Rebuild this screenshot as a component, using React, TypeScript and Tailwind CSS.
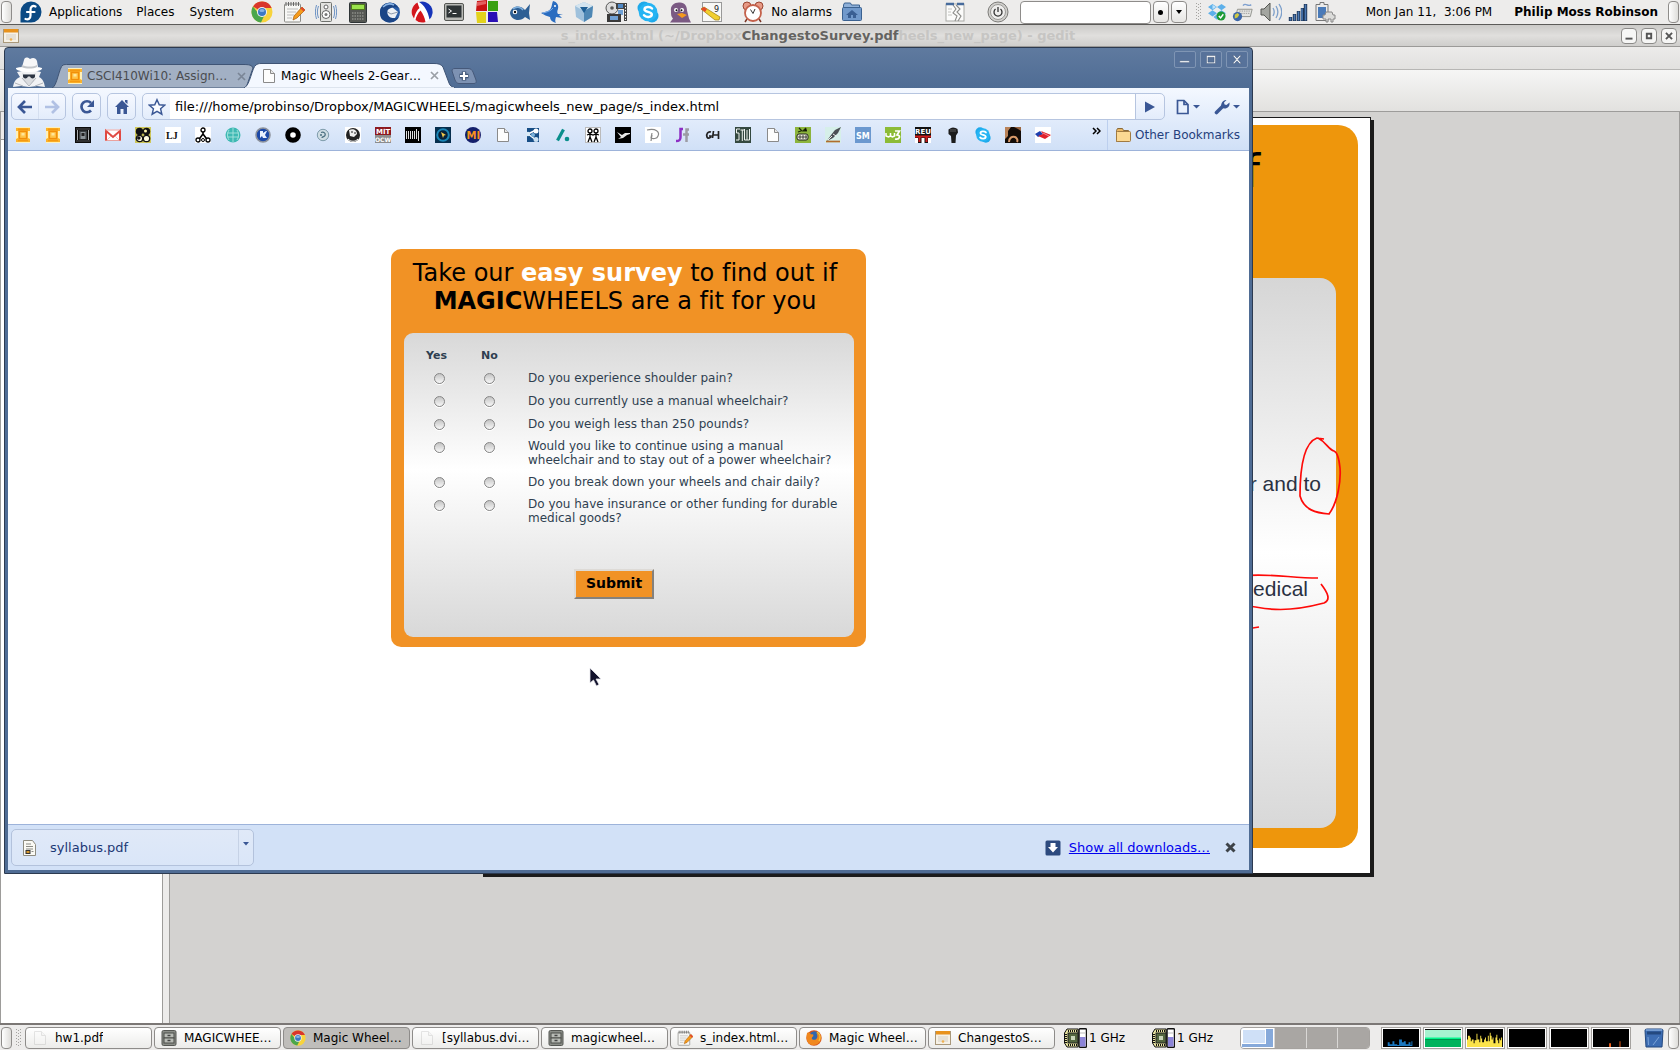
import React from "react";

type IconProps = { size?: number; children: React.ReactNode; box?: string; className?: string };

function Svg({ size = 16, box = "0 0 16 16", className = "", children }: IconProps) {
  return (
    <svg width={size} height={size} viewBox={box} className={"block shrink-0 " + className} aria-hidden="true">
      {children}
    </svg>
  );
}

const big = "0 0 22 22";

function ChromeLogo({ size = 22 }: { size?: number }) {
  return (
    <Svg size={size} box={big}>
      <circle cx="11" cy="11" r="10.5" fill="#f7d33c" />
      <path d="M11 11 L2 5.5 A10.5 10.5 0 0 1 20.6 7 L11 7z" fill="#d9362c" />
      <path d="M1.9 5.6 A10.5 10.5 0 0 0 10 21.4 L14 13 L8 13z" fill="#4aa64b" />
      <circle cx="11" cy="11" r="5" fill="#f4f4f4" />
      <circle cx="11" cy="11" r="4" fill="#3c78c3" />
      <ellipse cx="11" cy="9.5" rx="2.6" ry="1.6" fill="#86b4e6" />
    </Svg>
  );
}

function NotepadIcon({ size = 22 }: { size?: number }) {
  return (
    <Svg size={size} box={big}>
      <rect x="1.5" y="3" width="16" height="18" rx="1" fill="#f7f7f5" stroke="#8c8c88" />
      <path d="M3 1v4M5.5 1v4M8 1v4M10.5 1v4M13 1v4M15.5 1v4" stroke="#666" strokeWidth="1" />
      <path d="M4 8h11M4 11h9M4 14h7M4 17h5" stroke="#bbb" />
      <path d="M19 6l3 3-8 8-4 2 1-4z" fill="#f59b1c" stroke="#a65b08" strokeWidth=".7" />
      <path d="M19 6l3 3-1.5 1.5-3-3z" fill="#e2482d" />
    </Svg>
  );
}

function SkypeIcon({ size = 22 }: { size?: number }) {
  return (
    <Svg size={size} box={big}>
      <circle cx="7" cy="7" r="6.5" fill="#1ea9ea" />
      <circle cx="15" cy="15" r="6.5" fill="#1ea9ea" />
      <circle cx="11" cy="11" r="9.3" fill="#25b4f3" />
      <path d="M15 7.5C13 5.3 7.5 5.600 7.500 8.500C7.500 11.500 14.800 10.300 14.800 13.500C14.800 16.500 9 16.800 7 14.300" fill="none" stroke="#fff" strokeWidth="2.500" strokeLinecap="round" />
    </Svg>
  );
}

function DocIcon({ size = 16 }: { size?: number }) {
  return (
    <Svg size={size}>
      <path d="M2.500 1.500h7l4 4v9h-11z" fill="#fdfdfd" stroke="#8a8a8a" />
      <path d="M9.500 1.500v4h4" fill="#e8e8e8" stroke="#8a8a8a" />
    </Svg>
  );
}

function GateIcon({ dark = false }: { dark?: boolean }) {
  if (dark) {
    return (
      <Svg>
        <rect width="16" height="16" fill="#0c0c0c" />
        <path d="M1 2h14M1 14h14" stroke="#555" />
        <path d="M2.500 3v10M13.500 3v10" stroke="#a9adb0" />
        <path d="M4 3.500h8v9H4z" fill="#3a3f42" />
        <path d="M5.500 5h5v7h-5z" fill="#8b9398" />
        <rect x="6.500" y="6" width="3" height="3" fill="#222" />
      </Svg>
    );
  }
  return (
    <Svg>
      <rect x="1" width="14" height="16" fill="#fff0b8" />
      <path d="M1 1h14v3h-2v7l2 1v3H1v-3l2-1V4H1z" fill="#fbb22c" />
      <path d="M3 1.500h10v2H3z" fill="#f59a10" />
      <rect x="4.500" y="4.500" width="7" height="7" fill="#ffc64a" stroke="#f18f0a" strokeWidth="1.300" />
      <rect x="6.500" y="6" width="3" height="2.500" fill="#ffe69a" />
      <path d="M3 13.500h10" stroke="#f59a10" strokeWidth="1.500" />
    </Svg>
  );
}

function CabinetIcon() {
  return (
    <Svg>
      <rect x="1" y=".5" width="14" height="15" rx="1.500" fill="#8b8e88" stroke="#555753" />
      <rect x="3" y="3" width="10" height="5" fill="#b9bcb6" stroke="#4b4d49" />
      <rect x="3" y="8" width="10" height="5" fill="#b9bcb6" stroke="#4b4d49" />
      <path d="M6.500 5.500h3M6.500 10.500h3" stroke="#444" strokeWidth="1.500" />
    </Svg>
  );
}

function PresentationIcon() {
  return (
    <Svg>
      <rect x=".5" y="1.500" width="15" height="13" fill="#f6f1e6" stroke="#a9987a" />
      <rect x="1" y="1" width="14" height="3.500" fill="#e8921c" />
      <path d="M3 7h10M3 9h10M3 11h10" stroke="#d5cfc4" />
      <circle cx="8" cy="11.500" r="1.300" fill="#f0b050" />
    </Svg>
  );
}

function FirefoxIcon() {
  return (
    <Svg>
      <circle cx="8" cy="8" r="7.700" fill="#d8541a" />
      <circle cx="8.500" cy="6.500" r="5.200" fill="#2f67ae" />
      <path d="M1 3c2-1 3 0 4 1.500C7 4 8 5 7 6.500C6 7 5.500 8 6 9c1.500 1.500 4 1 5-1c1-2 0-4-1-5.500c3 1 5.500 4 4.500 8C12 16 5 16.500 2 12.500C0 9 .5 6 1 3z" fill="#f0881e" />
      <path d="M11 2c3 2 4 5 2 9" fill="none" stroke="#f8c535" strokeWidth="1.300" />
    </Svg>
  );
}

function Fav({ bg, children }: { bg?: string; children: React.ReactNode }) {
  return (
    <Svg>
      {bg && <rect width="16" height="16" fill={bg} />}
      {children}
    </Svg>
  );
}

const letter = { fontFamily: "DejaVu Sans", fontWeight: 700 } as const;

const favicons: { name: string; icon: React.ReactNode }[] = [
  { name: "Gate 1", icon: <GateIcon /> },
  { name: "Gate 2", icon: <GateIcon /> },
  { name: "Gate 3", icon: <GateIcon dark /> },
  {
    name: "Mail",
    icon: (
      <Fav>
        <rect y="2.500" width="16" height="11.500" fill="#fff" />
        <path d="M1 14V4L8 10l7-6v10" fill="none" stroke="#e04a43" strokeWidth="2" />
        <path d="M0 3h16M0 13.500h16" stroke="#e58a85" strokeWidth=".8" />
        <path d="M2 13l4-4M14 13l-4-4" stroke="#f0b0ac" strokeWidth=".8" />
      </Fav>
    ),
  },
  {
    name: "Dots",
    icon: (
      <Fav bg="#cfc85a">
        <circle cx="4.500" cy="4.500" r="3.700" fill="#111" />
        <circle cx="11.500" cy="4.500" r="3.700" fill="#111" />
        <circle cx="10.500" cy="4" r="1.500" fill="#fff5a8" />
        <circle cx="4.500" cy="11.500" r="3.200" fill="#fffce0" stroke="#111" strokeWidth="1.300" />
        <circle cx="11.500" cy="11.500" r="3.200" fill="#fffce0" stroke="#111" strokeWidth="1.300" />
        <circle cx="3.800" cy="11" r="1.800" fill="#111" />
      </Fav>
    ),
  },
  { name: "LJ", icon: <Fav bg="#fff"><text x="1" y="11.500" fontSize="10" fontWeight="700" fontFamily="Liberation Serif" fill="#111">LJ</text></Fav> },
  {
    name: "Tree",
    icon: (
      <Fav bg="#fff">
        <path d="M8 4v3L3.500 13M8 7l4.500 6" stroke="#000" strokeWidth="1.600" fill="none" />
        <circle cx="8" cy="3" r="2" fill="#fff" stroke="#000" strokeWidth="1.300" />
        <circle cx="3" cy="13" r="2" fill="#fff" stroke="#000" strokeWidth="1.300" />
        <circle cx="13" cy="13" r="2" fill="#fff" stroke="#000" strokeWidth="1.300" />
        <circle cx="8" cy="13" r="1.500" fill="#fff" stroke="#000" />
      </Fav>
    ),
  },
  {
    name: "Globe",
    icon: (
      <Fav>
        <circle cx="8" cy="8" r="7.500" fill="#3fb9b3" />
        <path d="M2 6h12M2 10h12M8 1v14M4 3c-2 4-2 6 0 10M12 3c2 4 2 6 0 10" stroke="#a8e4df" fill="none" strokeWidth=".9" />
      </Fav>
    ),
  },
  {
    name: "K",
    icon: (
      <Fav>
        <circle cx="8" cy="8" r="7" fill="#1c49a8" stroke="#8d929c" strokeWidth="1.600" />
        <path d="M5 4h3v2l3-2h1l-2 4 2 3H8l-1-2-2 2z" fill="#e8f0ff" />
      </Fav>
    ),
  },
  { name: "Record", icon: <Fav><circle cx="8" cy="8" r="5.300" fill="#fff" stroke="#000" strokeWidth="5" /><circle cx="8" cy="8" r="1.200" fill="#fff" /></Fav> },
  {
    name: "Swirl",
    icon: (
      <Fav>
        <circle cx="8" cy="8" r="5.700" fill="#cfdde3" stroke="#7e9cab" />
        <path d="M6 5.500c3-1 5 1 4 3S7 9 7 11M5 8h2" stroke="#4c7081" fill="none" strokeWidth="1.300" />
      </Fav>
    ),
  },
  {
    name: "Face",
    icon: (
      <Fav bg="#fff">
        <circle cx="8" cy="8" r="7" fill="#222" />
        <path d="M4 3c4-2 8 0 8 4l-3 3-4-1z" fill="#eee" />
        <path d="M6 5h2M9 6h2" stroke="#222" strokeWidth="1" />
        <path d="M3 12c3 3 7 3 10 0" stroke="#fff" strokeWidth="1" fill="none" />
      </Fav>
    ),
  },
  {
    name: "MIT OCW",
    icon: (
      <Fav bg="#8d8d8d">
        <rect width="16" height="8" fill="#8d1a20" />
        <text x="1" y="7" fontSize="7" fill="#fff" style={letter}>MIT</text>
        <text x="0" y="15" fontSize="6" fill="#fff" style={letter}>OCW</text>
      </Fav>
    ),
  },
  { name: "Press", icon: <Fav bg="#000"><path d="M1.500 4v8M3.500 4v8M5.500 4v8M7.500 4v8M9.500 4v8M11.500 2v10M13.500 4v10" stroke="#ddd" strokeWidth="1" /></Fav> },
  {
    name: "Target",
    icon: (
      <Fav bg="#062f4e">
        <circle cx="8" cy="8" r="5.800" fill="#06223b" stroke="#1b87b8" strokeWidth="2" />
        <path d="M6 5l5 3-2 .5L8 11z" fill="#f2c94a" />
      </Fav>
    ),
  },
  { name: "MI", icon: <Fav><circle cx="8" cy="8" r="8" fill="#15206b" /><text x="1.500" y="12" fontSize="10" fill="#f7931e" style={letter}>MI</text></Fav> },
  { name: "Page", icon: <DocIcon /> },
  {
    name: "Share",
    icon: (
      <Fav>
        <path d="M2 1h12v14H2z" fill="#174e86" />
        <path d="M3 7l8-4M3 7l8 6" stroke="#fff" strokeWidth="1.500" />
        <circle cx="3" cy="7" r="2.200" fill="#dcebf6" />
        <circle cx="11" cy="4" r="2.500" fill="#fff" />
        <circle cx="11" cy="12.500" r="2.500" fill="#cde2f2" />
        <circle cx="8" cy="8" r="2" fill="#7db3dc" />
      </Fav>
    ),
  },
  { name: "Slash", icon: <Fav><path d="M2.500 13.500L8.500 2.500" stroke="#0a8f8c" strokeWidth="3.200" /><circle cx="12" cy="12" r="2.300" fill="#0a8f8c" /></Fav> },
  {
    name: "Figures",
    icon: (
      <Fav bg="#fff">
        <rect x=".5" y=".5" width="15" height="15" fill="none" stroke="#777" strokeDasharray="1 1" />
        <circle cx="5" cy="4" r="2" fill="none" stroke="#000" strokeWidth="1.300" />
        <circle cx="11" cy="4" r="2" fill="none" stroke="#000" strokeWidth="1.300" />
        <path d="M5 6v4M2 8l3-1 3 1 3-1 3 1M5 10l-2 5M5 10l2 5M11 6v4l-2 5M11 10l2 5" stroke="#000" fill="none" strokeWidth="1.300" />
      </Fav>
    ),
  },
  { name: "Bird", icon: <Fav bg="#000"><path d="M2 5l5 3 3-2h5v1l-3 1-4 3-5 1 3-2z" fill="#e8e8e8" /></Fav> },
  { name: "D", icon: <Fav bg="#fff"><path d="M2 3c9-2 13 2 11 6c-1 3-5 3-7 2L7 6M6 14l1-6" fill="none" stroke="#888" strokeWidth="1.200" /></Fav> },
  {
    name: "SourceForge",
    icon: (
      <Fav>
        <path d="M8 2H5.500v8c0 3-1 4-4.500 4" fill="none" stroke="#8d2ec4" strokeWidth="2.500" />
        <path d="M14 2.500h-2.500V15M8 7.500h6" fill="none" stroke="#9c9ca4" strokeWidth="2.500" />
      </Fav>
    ),
  },
  { name: "GH", icon: <Fav><path d="M6 5c-3-1-5 2-4 5c1 2 4 1 4-1H4M8.500 4l-1 7M8 8h5M13.500 4v8" fill="none" stroke="#222" strokeWidth="1.700" /></Fav> },
  { name: "STW", icon: <Fav bg="#34483f"><path d="M5 2H1.500v4H4v7H1M5.500 3H9M7.300 3v11M9.500 2v11h2.500V3M12 13h2.500V2" fill="none" stroke="#eef2ee" strokeWidth="1" /></Fav> },
  { name: "Page", icon: <DocIcon /> },
  {
    name: "Skull",
    icon: (
      <Fav bg="#8cb43c">
        <path d="M4 1l3 3M11 1L8 4h4M3 5l3-1" stroke="#1d2a08" strokeWidth="1.200" />
        <rect x="2" y="7" width="11" height="6" rx="2" fill="#eef0dc" stroke="#222" />
        <path d="M5 8v4M8 8v4M11 8v4M3 10h9" stroke="#222" strokeWidth=".8" />
      </Fav>
    ),
  },
  {
    name: "Pen",
    icon: (
      <Fav bg="#d6efe9">
        <path d="M16 0l-6 3-4 5-4 6 6-3 5-5z" fill="#4b5054" />
        <path d="M8 7l3 2M3 13l4-4" stroke="#fff" strokeWidth=".9" />
        <path d="M1 14.500h14" stroke="#b06d2e" strokeWidth="1.700" />
      </Fav>
    ),
  },
  { name: "SM", icon: <Fav bg="#6b98cf"><text x="1" y="11.500" fontSize="8" fill="#fff" style={letter}>SM</text></Fav> },
  {
    name: "W3",
    icon: (
      <Fav bg="#8cbb36">
        <path d="M1 6v3l2.500 1 2-1V6M5.500 9l2 1 2-1V6" fill="none" stroke="#fff" strokeWidth="1.500" />
        <path d="M10 4h4.500L12 8c4 0 3 5-2 4" fill="none" stroke="#fff" strokeWidth="1.700" />
      </Fav>
    ),
  },
  {
    name: "REU",
    icon: (
      <Fav bg="#111">
        <text x="0" y="7" fontSize="7" fill="#fff" style={letter}>REU</text>
        <path d="M0 11h3v5H0zM13 11h3v5h-3zM6.500 11h3v5h-3z" fill="#fff" />
        <path d="M0 9.500h16M4.500 9v6M11.500 9v6" stroke="#d01a1a" strokeWidth="2" />
      </Fav>
    ),
  },
  { name: "Fist", icon: <Fav><path d="M3.500 2.500L6 1l2-.5 2.500.5 2 1 .5 3.500-2 3L10.500 16H6.500L6 9 3.500 7z" fill="#1c1c1c" /><path d="M6 2v3M8 2v3M10 2v3" stroke="#777" strokeWidth=".7" /></Fav> },
  { name: "Skype", icon: <SkypeIcon size={16} /> },
  {
    name: "Portrait",
    icon: (
      <Fav bg="#120c08">
        <path d="M0 0h6L3 4v5l-3 3z" fill="#b98258" />
        <path d="M9 0h7v4l-3-2z" fill="#9a6640" />
        <path d="M4 15c0-4 3-6 6-5 2 1 3 3 2 5" fill="none" stroke="#d89a6a" strokeWidth="2" />
      </Fav>
    ),
  },
  {
    name: "Bank",
    icon: (
      <Fav bg="#fff">
        <path d="M0 7l5-3 3 3-5 3z" fill="#1d3fae" />
        <path d="M6 4l10 4-6 4-7-3 5-2z" fill="#e0202c" />
        <path d="M8 6l6 3" stroke="#fff" strokeWidth=".5" />
      </Fav>
    ),
  },
];

const launchers: { name: string; icon: React.ReactNode }[] = [
  { name: "Chrome", icon: <ChromeLogo /> },
  { name: "Text Editor", icon: <NotepadIcon /> },
  {
    name: "Sound",
    icon: (
      <Svg size={22} box={big}>
        <rect x="5.500" y="1.500" width="11" height="19" rx="1" fill="#e2e2df" stroke="#6f716d" />
        <circle cx="11" cy="6" r="2" fill="#fff" stroke="#666" />
        <circle cx="11" cy="13.500" r="4" fill="#fff" stroke="#666" />
        <circle cx="11" cy="13.500" r="1.500" fill="#777" />
        <path d="M3.500 5c-1.500 4-1.500 8 0 12M18.500 5c1.500 4 1.500 8 0 12M1.500 4c-1.500 5-1.500 9 0 14M20.500 4c1.500 5 1.500 9 0 14" fill="none" stroke="#6d93c4" />
      </Svg>
    ),
  },
  {
    name: "Calculator",
    icon: (
      <Svg size={22} box={big}>
        <rect x="2.500" y="1.500" width="17" height="20" rx="1" fill="#555753" stroke="#2e3436" />
        <rect x="4.500" y="3.500" width="13" height="5" fill="#9be34c" stroke="#4e7a1c" />
        <path d="M5 12h12M5 15h12M5 18h12" stroke="#8c8f89" strokeWidth="1.500" strokeDasharray="1.500 1" />
      </Svg>
    ),
  },
  {
    name: "Thunderbird",
    icon: (
      <Svg size={22} box={big}>
        <circle cx="11" cy="11.500" r="10" fill="#2a5ea8" />
        <path d="M5 9l8-3 6 5-3 6-8 0-3-4z" fill="#eef1f5" />
        <path d="M5 9l7 4 7-2" stroke="#8c99ac" fill="none" />
        <path d="M1 10C2 3 9 0 16 3l5 5c-3-2-6-2-9-1s-5 3-3 7c2 4 8 4 11 2-3 6-12 7-16 3C1 17 1 13 1 10z" fill="#1b4586" />
        <path d="M4 6c3-3 7-4 11-2" stroke="#89b3e4" fill="none" strokeWidth="1.500" />
      </Svg>
    ),
  },
  {
    name: "Racket",
    icon: (
      <Svg size={22} box={big}>
        <circle cx="11" cy="11" r="10.500" fill="#fff" />
        <path d="M8 1A10.500 10.500 0 0 1 18.500 18.500C17 10 13 4 8 1z" fill="#1634b8" />
        <path d="M6.500 1.500A10.500 10.500 0 0 0 3 17.500C4 13 6 9 8.500 7 7.500 5 7 3 6.500 1.500z" fill="#d3161c" />
        <path d="M9.500 9.500C7 12 5 16 4.500 19A10.500 10.500 0 0 0 14.500 21C13.500 16 12 13 9.500 9.500z" fill="#d3161c" />
      </Svg>
    ),
  },
  {
    name: "Terminal",
    icon: (
      <Svg size={22} box={big}>
        <rect x="1.500" y="2.500" width="19" height="17" rx="1.500" fill="#b9bab6" stroke="#555753" />
        <rect x="3.500" y="4.500" width="15" height="12" fill="#2e3436" />
        <path d="M5.500 8l3 2-3 2M9.500 12.500h4" stroke="#fff" fill="none" />
      </Svg>
    ),
  },
  {
    name: "Blocks",
    icon: (
      <Svg size={24} box="0 0 24 24">
        <path d="M2 1l10-1v11H1z" fill="#c81414" />
        <path d="M13 1h10v10H13z" fill="#39a012" />
        <path d="M1 12h10v11H2z" fill="#e3d21c" />
        <path d="M13 12h9l1 10H13z" fill="#2a0fb5" />
        <path d="M2 2l9-1v3l-9 2z" fill="#f08080" opacity=".7" />
      </Svg>
    ),
  },
  {
    name: "Bluefish",
    icon: (
      <Svg size={22} box={big}>
        <path d="M1 12C2 5 11 3 16 9l5-6-1 9 1 7-5-3C12 21 2 20 1 12z" fill="#2d5f94" />
        <path d="M4 8c3-3 8-2 10 1" stroke="#7fb0dd" fill="none" strokeWidth="1.500" />
        <circle cx="6" cy="11" r="2.300" fill="#fff" />
        <circle cx="6" cy="11" r="1.200" fill="#111" />
      </Svg>
    ),
  },
  {
    name: "Swordfish",
    icon: (
      <Svg size={22} box={big}>
        <path d="M12 0c4 1 6 4 5 8-1 2-1 4 0 5l5 0-4 1 3 3-6-1c-1 3-1 5 0 6-4-1-6-3-6-6-3-1-6-2-9-4 4-1 9-2 10-5 1-2 1-5 2-7z" fill="#2b6dc0" />
        <path d="M2 12c4-1 8-2 10-5" stroke="#7fb0ea" fill="none" />
        <circle cx="14" cy="5" r="1" fill="#fff" />
      </Svg>
    ),
  },
  {
    name: "VirtualBox",
    icon: (
      <Svg size={22} box={big}>
        <path d="M11 1l9 4-1 11-8 5-8-5L2 5z" fill="#9fc1dc" />
        <path d="M11 1l9 4-9 5-9-5z" fill="#d3e4f0" />
        <path d="M11 10l9-5-1 11-8 5z" fill="#4e87b4" />
        <path d="M7 6l4 6 4-6z" fill="#1f5f95" />
      </Svg>
    ),
  },
  {
    name: "Movie",
    icon: (
      <Svg size={22} box={big}>
        <circle cx="7" cy="7" r="6" fill="#ddd" stroke="#555" />
        <circle cx="7" cy="7" r="1.800" fill="#555" />
        <path d="M11 2h11v18h-3V8h-8z" fill="#444" />
        <rect x="13" y="3" width="5" height="4" fill="#4f87c4" />
        <rect x="13" y="9" width="5" height="5" fill="#6fa0d4" />
        <rect x="2" y="13" width="14" height="8" fill="#3a3a3a" />
        <rect x="5" y="15" width="8" height="4" fill="#6fa0d4" />
        <path d="M20.500 3v16" stroke="#fff" strokeDasharray="1.500 1.500" />
      </Svg>
    ),
  },
  { name: "Skype", icon: <SkypeIcon /> },
  {
    name: "Pidgin",
    icon: (
      <Svg size={22} box={big}>
        <path d="M2 10C1 4 6 1 11 1.500c5 0 7 4 7 8l2 8 2 4H1l3-4c-2-2-2-4-2-7z" fill="#7b5a83" />
        <circle cx="7" cy="9" r="2" fill="#fff" />
        <circle cx="13" cy="9" r="2" fill="#fff" />
        <circle cx="7.500" cy="9.300" r="1" fill="#111" />
        <circle cx="12.500" cy="9.300" r="1" fill="#111" />
        <path d="M8 13l5-1 5 2-5 3z" fill="#f59a1d" />
      </Svg>
    ),
  },
  {
    name: "Planner",
    icon: (
      <Svg size={22} box={big}>
        <rect x="1.500" y="1.500" width="19" height="19" fill="#f8f8f6" stroke="#999" />
        <text x="13" y="11" fontSize="8" fontFamily="DejaVu Sans" fill="#222">9</text>
        <path d="M0 8l3-2 16 10-1 3-4 0z" fill="#f1cf2e" stroke="#9b7b0e" strokeWidth=".7" />
        <path d="M0 8l3-2 3 2-2 3z" fill="#e34b2a" />
      </Svg>
    ),
  },
];

function Grip() {
  return (
    <svg width="6" height="18" viewBox="0 0 6 18" className="block shrink-0" aria-hidden="true">
      <path d="M.5 0v18M2.500 1v17M4.500 0v18" stroke="#a5a4a1" strokeDasharray="1 2" />
    </svg>
  );
}

function Handle() {
  return <button aria-label="Hide panel" className="h-[22px] w-[11px] shrink-0 rounded border border-[#8e8c8a] bg-linear-to-r from-white to-[#deddda]" />;
}

function TopPanel() {
  return (
    <header className="flex h-[25px] shrink-0 items-center border-b border-[#5c5b59] bg-[#edeceb] px-px text-xs text-black">
      <Handle />
      <nav className="flex items-center pl-2">
        <Svg size={22} box={big}>
          <path d="M11 .5a10.500 10.500 0 1 1 0 21H.5V11A10.500 10.500 0 0 1 11 .5z" fill="#0b4a84" />
          <path d="M15.500 5.500c-3-1.500-5 .5-5 3v6c0 3-2 4.500-5 3.500M7 11h7.500" fill="none" stroke="#fff" strokeWidth="2.200" strokeLinecap="round" />
        </Svg>
        <button className="ml-[7px]">Applications</button>
        <button className="ml-[14px]">Places</button>
        <button className="ml-[15px]">System</button>
      </nav>
      <div className="ml-[17px] flex items-center gap-[10px]">
        {launchers.map((l) => (
          <button key={l.name} aria-label={l.name}>{l.icon}</button>
        ))}
      </div>
      <button className="ml-[19px] flex items-center gap-[7px] whitespace-nowrap">
        <Svg size={22} box={big}>
          <circle cx="5" cy="5" r="4" fill="#e79a86" stroke="#9a4632" />
          <circle cx="17" cy="5" r="4" fill="#e79a86" stroke="#9a4632" />
          <path d="M5 18l-2 3M17 18l2 3" stroke="#7a3626" strokeWidth="1.500" />
          <circle cx="11" cy="12" r="8" fill="#fff" stroke="#c4614b" strokeWidth="1.800" />
          <path d="M8.500 8.500l2.500 4 2-4.500" stroke="#333" fill="none" />
        </Svg>
        No alarms
      </button>
      <button aria-label="Home folder" className="ml-[9px]">
        <Svg size={22} box={big}>
          <path d="M2.500 4l1-2h6l1 2h8v4h-16z" fill="#8fb0d8" stroke="#3b6291" />
          <rect x="1.500" y="6.500" width="19" height="13" rx="1" fill="#7199cb" stroke="#3b6291" />
          <path d="M11 9l6 5h-2v3h-3v-3h-2v3H7v-3H5z" fill="#3a5f93" />
        </Svg>
      </button>
      <button aria-label="Force quit" className="ml-auto">
        <Svg size={22} box={big}>
          <rect x="2" y="3" width="18" height="17" fill="#fbfbfa" stroke="#a9a9a6" />
          <path d="M9 4l3 4-3 4 4 3-2 5M12 4l4 4-3 3 4 4-3 5" fill="none" stroke="#8d8d8a" strokeWidth="1.100" />
          <path d="M4 8h4M4 11h3M4 14h4" stroke="#c4c4c0" />
          <path d="M2 3h8M13 3h7" stroke="#476b9c" strokeWidth="2.500" />
        </Svg>
      </button>
      <button aria-label="Shut down" className="ml-[21px]">
        <Svg size={22} box={big}>
          <circle cx="11" cy="11" r="10" fill="#d0cfcc" stroke="#7d7c79" />
          <circle cx="11" cy="11" r="7.500" fill="#efeeed" stroke="#9a9996" />
          <path d="M8.500 8a4 4 0 1 0 5 0M11 6v5" fill="none" stroke="#333" strokeWidth="1.300" />
        </Svg>
      </button>
      <input aria-label="Command line" className="ml-[11px] h-[23px] w-[131px] rounded border border-[#8e8c8a] bg-white px-1" />
      <button aria-label="Browse" className="ml-[2px] flex h-[22px] w-4 items-center justify-center rounded border border-[#8e8c8a] bg-linear-to-b from-white to-[#e6e5e3]">
        <span className="size-[5px] rounded-full bg-black" />
      </button>
      <button aria-label="History" className="ml-[2px] flex h-[22px] w-4 items-center justify-center rounded border border-[#8e8c8a] bg-linear-to-b from-white to-[#e6e5e3]">
        <Svg size={6} box="0 0 6 6"><path d="M0 1h6L3 5z" /></Svg>
      </button>
      <div className="ml-[9px] flex items-center gap-[6px]">
        <Grip />
        <Svg size={18} box="0 0 20 20">
          <path d="M5 1l5 3.500L5 8 0 4.500zM15 1l5 3.500L15 8l-5-3.500zM5 8l5 3.500L5 15l-5-3.500zM15 8l5 3.500-5 3.500-5-3.500zM10 12.500l4 3-4 3-4-3z" fill="#5db0ea" />
          <path d="M5 2l4 2.500-4 2.500z" fill="#bfe3fa" />
          <circle cx="14.500" cy="14.500" r="5" fill="#1e9a35" />
          <path d="M12 14.500l2 2 3-4" stroke="#fff" strokeWidth="1.600" fill="none" />
        </Svg>
        <Svg size={22} box="0 0 24 22">
          <path d="M6 8h16l-2 8H4z" fill="#e4e4e1" stroke="#8d8f8a" />
          <path d="M8 10h12M7.500 12.500h12" stroke="#999" strokeDasharray="1.500 1" />
          <path d="M12 4c3-4 5 2 9-1" stroke="#7fa0cf" fill="none" strokeWidth="1.500" />
          <circle cx="6" cy="16" r="5" fill="#3c66a8" />
          <path d="M3 14l3-2 2 2-2 3-3 1z" fill="#cfc944" />
        </Svg>
        <Svg size={22} box={big}>
          <path d="M1 8h3l6-6v18l-6-6H1z" fill="#a3a5a0" stroke="#555753" />
          <path d="M13 7c1.500 2.500 1.500 5.500 0 8M16 5c2.500 4 2.500 8 0 12M19 3c3.500 5 3.500 11 0 16" fill="none" stroke="#7d9fca" strokeWidth="1.300" />
        </Svg>
        <Svg size={20} box="0 0 20 20">
          <path d="M2.500 19v-4M6.500 19v-7M10.500 19V9M14.500 19V6M17.500 19V2" stroke="#1e3454" strokeWidth="3.400" />
          <path d="M2.500 18.500v-3M6.500 18.500v-6M10.500 18.500v-9M14 18.500v-12M17.500 18.500v-16" stroke="#4c7ab5" strokeWidth="1.600" />
        </Svg>
        <Svg size={22} box={big}>
          <path d="M2 3.500h4V1.500h4v2h4v16H2z" fill="#ecebea" stroke="#777" />
          <rect x="4" y="6" width="8" height="11" fill="#4a7ab8" />
          <path d="M9 18v-4h2l1-3h6l1 3h2v4h-2v3h-2v-3h-3v3h-2v-3z" fill="#dcdcda" stroke="#888" />
        </Svg>
      </div>
      <time className="ml-[30px] whitespace-pre">Mon Jan 11,  3:06 PM</time>
      <button className="ml-[22px] mr-[10px] whitespace-nowrap font-bold">Philip Moss Robinson</button>
      <Handle />
    </header>
  );
}

function DocumentWindow() {
  return (
    <section className="flex h-full flex-col bg-[#d3d2d0]">
      <div className="relative flex h-[22px] shrink-0 items-center border-b border-[#9b9a98] bg-linear-to-b from-[#cbcac8] via-[#e0dfdd] to-[#cfcecc] pl-[3px] pr-[3px]">
        <PresentationIcon />
        <h2 className="flex flex-1 justify-center pr-1 text-[13px] font-bold text-[#c6c5c3]">
          <span>s_index.html (~/Dropbox</span>
          <span className="text-[#646361]">ChangestoSurvey.pdf</span>
          <span>heels_new_page) - gedit</span>
        </h2>
        <div className="flex gap-1">
          {[
            { n: "Minimize", d: "M4 11h8" },
            { n: "Maximize", d: "M5.500 5.500h5v5h-5z" },
            { n: "Close", d: "M4.500 4.500l7 7M11.500 4.500l-7 7" },
          ].map((b) => (
            <button key={b.n} aria-label={b.n} className="size-4 rounded border border-[#8b8a88] bg-[#f6f6f5]">
              <Svg size={14}><path d={b.d} fill="none" stroke="#555" strokeWidth="2.200" /></Svg>
            </button>
          ))}
        </div>
      </div>
      <div className="h-[23px] shrink-0 border-b border-[#b7b6b4] bg-linear-to-b from-[#ecebea] to-[#e2e1df]" />
      <div className="h-[42px] shrink-0 border-b border-[#9d9c9a] bg-linear-to-b from-[#f6f6f5] to-[#e2e1df]" />
      <div className="flex min-h-0 flex-1">
        <aside className="flex w-[163px] shrink-0 flex-col border-x border-[#9d9c9a] bg-white">
          <div className="h-[28px] border-b border-[#9d9c9a] bg-[#eceae9]" />
        </aside>
        <div className="w-[6px] shrink-0 bg-[#ecebea]" />
        <div className="flex min-w-0 flex-1 border-l border-r border-l-[#9d9c9a] border-r-[#9d9c9a] pb-[149px] pl-[310px] pr-[308px] pt-[5px]">
          <article className="relative flex flex-1 flex-col border border-[#1b1b1b] bg-white pb-[25px] pl-6 pr-[12px] pt-[7px] shadow-[3px_3px_0_#1b1b1b]">
            <div className="flex flex-1 flex-col rounded-[20px] bg-[#ee960c] px-[22px] pb-[20px]">
              <div className="flex h-[153px] items-start justify-end pr-[76px] pt-[18px] text-[46px] leading-[56px] text-black">if</div>
              <div className="flex flex-1 flex-col items-end rounded-[16px] bg-linear-to-b from-[#d6d6d6] via-white to-[#d8d8d8] text-[21px] leading-[24px] text-[#2a3142]" style={{ fontFamily: '"Liberation Sans", sans-serif' }}>
                <p className="mr-[15px] mt-[194px]">wheelchair and to</p>
                <p className="mr-[28px] mt-[81px]">medical</p>
              </div>
            </div>
            <svg className="absolute right-0 top-[312px]" width="130" height="210" viewBox="0 0 130 210" fill="none" stroke="#fe0a08" strokeWidth="1.700" aria-hidden="true">
              <path d="M84 9l-7-1C66 12 60 30 60 66C64 80 76 83 89 84C98 72 101 50 100 38C99 28 97 22 94 21C88 19 86 12 78 8" />
              <path d="M0 146C30 143 50 148 78 148M81 154C88 163 91 170 84 173C50 182 30 181 0 174M0 200l19-3" />
            </svg>
          </article>
        </div>
      </div>
    </section>
  );
}

function IncognitoIcon() {
  return (
    <svg width="34" height="32" viewBox="0 0 34 32" className="block" aria-hidden="true">
      <path d="M1 31c1-6 3-8 7-10l-3-5 5-1h14l5 1-2 5c4 2 5 5 6 10l-8-1-8 1-8-1z" fill="#f1f2f4" />
      <path d="M10 11l2-7c1-3 3-3 6-1 3-2 6-1 7 2l1 6c-5 2-11 2-16 0z" fill="#f7f7f8" />
      <path d="M4 12c8-2 19-2 26 0 1 2-6 4-13 4S3 14 4 12z" fill="#fff" />
      <path d="M10 9c5 2 11 2 15 0v2c-4 2-11 2-15.500 0z" fill="#c3c6ca" />
      <path d="M10 17c4 2 10 2 14 0l-2 8-5 4-5-4z" fill="#dadcdf" />
      <path d="M11 18.500h12v2c0 2-4 3-5 0h-2c-1 3-5 2-5 0z" fill="#2b3442" />
      <path d="M10 22l7 8 7-8M3 27l8 3M31 27l-8 3" stroke="#a9adb3" fill="none" strokeWidth=".9" />
    </svg>
  );
}

function CloseX({ color }: { color: string }) {
  return <Svg size={9} box="0 0 9 9"><path d="M1 1l7 7M8 1L1 8" stroke={color} strokeWidth="1.700" /></Svg>;
}

function TabStrip() {
  return (
    <div className="flex h-[40px] shrink-0 items-end pl-1">
      <div className="flex w-[40px] shrink-0 items-end"><IncognitoIcon /></div>
      <div className="relative flex h-[24px] w-[205px] shrink-0 items-center">
        <svg className="absolute inset-0" width="205" height="24" viewBox="0 0 205 24" aria-hidden="true">
          <path d="M0 24C5 23 7 3 11 1C12 .5 14 .5 16 .5H191C197 .5 200 1 201 4L194 24z" fill="#a2b0c4" stroke="#3f5475" />
        </svg>
        <div className="relative flex flex-1 items-center pl-[15px] pr-[11px] text-xs text-[#4a4c50]">
          <GateIcon />
          <span className="ml-1 flex-1 truncate">CSCI410Wi10: Assign…</span>
          <button aria-label="Close tab"><CloseX color="#7a8596" /></button>
        </div>
      </div>
      <div className="relative -ml-[13px] flex h-[25px] w-[211px] shrink-0 items-center">
        <svg className="absolute inset-0" width="211" height="25" viewBox="0 0 211 25" aria-hidden="true">
          <path d="M0 25C6 23 8 4 12 2C13 1 15 .5 17 .5H190C194 .5 197 1 199 4L205 20C206 23 208 24 211 25z" fill="#f4f8ff" stroke="#3f5475" />
          <path d="M1 25h209" stroke="#f4f8ff" strokeWidth="1.500" />
        </svg>
        <div className="relative flex flex-1 items-center pl-[17px] pr-[16px] text-xs text-black">
          <DocIcon />
          <span className="ml-1 flex-1 truncate">Magic Wheels 2-Gear…</span>
          <button aria-label="Close tab"><CloseX color="#9a9fa6" /></button>
        </div>
      </div>
      <button aria-label="New tab" className="mb-1 -ml-[4px]">
        <svg width="26" height="16" viewBox="0 0 26 16" className="block" aria-hidden="true">
          <path d="M1 3C1 1 2 .5 4 .5H17C20 .5 21 2 22 4L25 12C25.500 14 25 15.500 23 15.500H8C6 15.500 5 14 4 12z" fill="#7d92b3" stroke="#46597a" />
          <path d="M13 3.500v9M8.500 8h9" stroke="#3f5475" strokeWidth="4.500" />
          <path d="M13 4v8M9 8h8" stroke="#fff" strokeWidth="2.200" />
        </svg>
      </button>
      <div className="mb-auto ml-auto mr-px mt-[3px] flex gap-1">
        {[
          { n: "Minimize", d: "M5 10h11v2h-11z" },
          { n: "Maximize", d: "M6 4h10v9h-10zM7.500 6v5.500h7v-5.500z" },
          { n: "Close", d: "M6 4h2l3 3 3-3h2l-4 4.500 4 4.500h-2l-3-3-3 3h-2l4-4.500z" },
        ].map((b) => (
          <button key={b.n} aria-label={b.n} className="h-[17px] w-[22px] rounded-xs border border-[#7f95b4] bg-[#57729a]">
            <svg width="20" height="15" viewBox="0 0 22 17" className="block" aria-hidden="true">
              <path d={b.d} fill="#fff" fillRule="evenodd" stroke="#3c5071" strokeWidth=".5" />
            </svg>
          </button>
        ))}
      </div>
    </div>
  );
}

const toolButton = "flex h-[27px] shrink-0 items-center rounded-[5px] border border-[#b6c5e0] bg-linear-to-b from-[#f6f9ff] to-[#e3ecfb]";

function Toolbar() {
  return (
    <div className="flex h-[32px] shrink-0 items-end pl-[3px] pr-[9px]">
      <div className={toolButton + " w-[55px]"}>
        <button aria-label="Back" className="flex h-full flex-1 items-center justify-center border-r border-[#d5dff0]">
          <Svg><path d="M8 2L2 8l6 6M2.500 8H15" fill="none" stroke="#3a5795" strokeWidth="2.700" /></Svg>
        </button>
        <button aria-label="Forward" className="flex h-full flex-1 items-center justify-center">
          <Svg><path d="M8 2l6 6-6 6M13.500 8H1" fill="none" stroke="#b1c1e4" strokeWidth="2.700" /></Svg>
        </button>
      </div>
      <button aria-label="Reload" className={toolButton + " ml-[6px] w-[29px] justify-center"}>
        <Svg><path d="M12 11.500A5.500 5.500 0 1 1 12 4" fill="none" stroke="#3a5795" strokeWidth="2.700" /><path d="M15 1v7H8z" fill="#3a5795" /></Svg>
      </button>
      <button aria-label="Home" className={toolButton + " ml-[6px] w-[29px] justify-center"}>
        <Svg><path d="M8 1l7 7h-2v7H9.500v-5h-3v5H3V8H1zM11 1h2.500v4L11 3z" fill="#3a5795" /></Svg>
      </button>
      <div className={toolButton + " ml-[6px] min-w-0 flex-1"}>
        <button aria-label="Bookmark this page" className="flex h-full w-[27px] items-center justify-center">
          <Svg size={18}><path d="M8 1.500l2 4.500 4.800.4-3.600 3.200 1.100 4.800L8 11.900l-4.300 2.500 1.100-4.800L1.200 6.400 6 6z" fill="#fbfcff" stroke="#3a5795" strokeWidth="1.300" /></Svg>
        </button>
        <input aria-label="Address" defaultValue="file:///home/probinso/Dropbox/MAGICWHEELS/magicwheels_new_page/s_index.html" className="h-full min-w-0 flex-1 border-r border-[#b6c5e0] bg-white pl-[5px] text-[13px] text-black" />
        <button aria-label="Go" className="flex h-full w-[28px] items-center justify-center">
          <Svg size={12} box="0 0 12 12"><path d="M1 .5l10 5.500L1 11.500z" fill="#3a5795" /></Svg>
        </button>
      </div>
      <button aria-label="Page menu" className="ml-[10px] flex h-[27px] items-center gap-[2px]">
        <Svg size={16}><path d="M2.500 1.500h6.500l4 4v9H2.500zM9 1.500v4h4" fill="#e8f0fd" stroke="#3a5795" strokeWidth="1.700" /></Svg>
        <Svg size={7} box="0 0 7 7"><path d="M0 2h7L3.500 5.500z" fill="#3a5795" /></Svg>
      </button>
      <button aria-label="Tools menu" className="ml-[14px] flex h-[27px] items-center gap-[3px]">
        <Svg size={16}><path d="M2.500 13.500L9 7" stroke="#3a5795" strokeWidth="3.600" strokeLinecap="round" /><path d="M12.500 1L10 3.500l.5 2 2 .5L15.500 3.500C16 7 14 9.500 10.500 9.500 7 9.500 6.500 6 8 3.500 9 1.500 11 .7 12.500 1z" fill="#3a5795" /></Svg>
        <Svg size={7} box="0 0 7 7"><path d="M0 2h7L3.500 5.500z" fill="#3a5795" /></Svg>
      </button>
    </div>
  );
}

function BookmarkBar() {
  return (
    <div className="flex h-[30px] shrink-0 items-center pl-[7px] pr-[9px]">
      <div className="flex min-w-0 gap-[14px]">
        {favicons.map((f, i) => (
          <button key={i} aria-label={f.name}>{f.icon}</button>
        ))}
      </div>
      <button aria-label="More bookmarks" className="mb-2 ml-auto">
        <Svg size={9} box="0 0 9 9"><path d="M1 1l3 3-3 3M5 1l3 3-3 3" fill="none" stroke="#000" strokeWidth="1.500" /></Svg>
      </button>
      <div className="ml-[6px] h-full w-px bg-[#bccfee]" />
      <button className="ml-[7px] flex items-center gap-[4px] whitespace-nowrap text-xs text-[#25407c]">
        <Svg><path d="M1.500 3.500l1-2h5l1 2h5v11h-12z" fill="#e9b765" stroke="#8a6a3a" /><rect x="1.500" y="4.500" width="14" height="10" rx="1" fill="#fcd993" stroke="#a17b42" /></Svg>
        Other Bookmarks
      </button>
    </div>
  );
}

const questions = [
  "Do you experience shoulder pain?",
  "Do you currently use a manual wheelchair?",
  "Do you weigh less than 250 pounds?",
  "Would you like to continue using a manual wheelchair and to stay out of a power wheelchair?",
  "Do you break down your wheels and chair daily?",
  "Do you have insurance or other funding for durable medical goods?",
];

const radioClass = "block size-[11px] appearance-none rounded-full border border-[#858585] bg-linear-to-b from-[#c4c4c4] to-[#f8f8f8] shadow-[0_1px_0_#ffffff]";

function Survey() {
  return (
    <form className="mx-auto w-[475px] rounded-[10px] bg-[#f19225] pb-[10px] pl-[13px] pr-[12px]" onSubmit={(e) => e.preventDefault()}>
      <h1 className="h-[84px] pr-2 pt-[10px] text-center text-2xl leading-[28px] text-black [font-variant-ligatures:none]">
        Take our <strong className="text-white">easy survey</strong> to find out if
        <br />
        <strong>MAGIC</strong>WHEELS are a fit for you
      </h1>
      <div className="flex h-[304px] flex-col rounded-[9px] bg-linear-to-b from-[#d8d8d8] via-white via-45% to-[#d8d8d8] pt-[11px] text-[#2f3f50]">
        <table className="w-full table-fixed border-collapse text-xs leading-[14px]">
          <colgroup>
            <col className="w-[72px]" />
            <col className="w-[52px]" />
            <col />
          </colgroup>
          <thead>
            <tr className="h-[23px] text-[11px]">
              <th scope="col" className="pl-[22px] text-left font-bold">Yes</th>
              <th scope="col" className="pl-[5px] text-left font-bold">No</th>
              <td />
            </tr>
          </thead>
          <tbody>
            {questions.map((q, i) => (
              <tr key={q}>
                <td className="h-[23px] pl-[30px] pt-[6px] align-top"><input type="radio" name={"q" + i} aria-label={"Yes: " + q} className={radioClass} /></td>
                <td className="pl-2 pt-[6px] align-top"><input type="radio" name={"q" + i} aria-label={"No: " + q} className={radioClass} /></td>
                <td className="pb-[4px] pr-[14px] pt-[3px] align-middle">{q}</td>
              </tr>
            ))}
          </tbody>
        </table>
        <button type="submit" className="mb-[38px] ml-[170px] mt-auto h-[30px] w-[80px] border-2 border-b-[#85817c] border-l-[#dddad6] border-r-[#85817c] border-t-[#dddad6] bg-[#f19225] pb-0.5 text-sm font-bold text-black">Submit</button>
      </div>
    </form>
  );
}

function DownloadShelf() {
  return (
    <div className="flex h-[46px] shrink-0 items-center border-t border-[#9db3da] bg-[#d2e1f7] pl-[3px] pr-[13px] text-[13px]">
      <div className="flex h-[37px] w-[243px] items-stretch rounded-[5px] border border-[#b3c2dc] bg-linear-to-b from-[#e0e9f8] to-[#dae6f8]">
        <button className="flex flex-1 items-center pl-[10px] text-[#1c3875]">
          <Svg>
            <path d="M1.500 .5h9l3 4v11h-12z" fill="#fbfaf4" stroke="#8e8c80" />
            <path d="M4 4h5M4 6.500h7M4 9h7M9.500 11.500h2" stroke="#8a8a84" strokeWidth="1.200" />
            <rect x="4" y="10.500" width="4" height="3" fill="#d89a2e" stroke="#333" />
          </Svg>
          <span className="ml-3">syllabus.pdf</span>
        </button>
        <button aria-label="Download options" className="w-[15px] border-l border-[#c6d2e6] pb-2 pl-1">
          <Svg size={6} box="0 0 6 6"><path d="M0 1h6L3 4.500z" fill="#3a5795" /></Svg>
        </button>
      </div>
      <a href="#downloads" className="ml-auto flex items-center gap-2 text-[#0000ee]">
        <Svg><rect x=".5" y=".5" width="15" height="15" rx="1.500" fill="#2d4a7e" /><path d="M5.500 3h5v4h2.500l-5 5.500L3 7h2.500z" fill="#fff" /></Svg>
        <span className="underline">Show all downloads…</span>
      </a>
      <button aria-label="Close downloads" className="ml-[15px]">
        <Svg size={11} box="0 0 11 11"><path d="M1.500 1.500l8 8M9.500 1.500l-8 8" stroke="#3d4248" strokeWidth="3" /></Svg>
      </button>
    </div>
  );
}

function BrowserWindow() {
  return (
    <section className="absolute bottom-[149px] left-[4px] right-[427px] top-[22px] flex flex-col rounded-t-[4px] border border-[#2c3a50] bg-linear-to-b from-[#5f7a9f] to-[#4f6c94] to-[40px] px-[3px] pb-[3px]">
      <TabStrip />
      <div className="flex min-h-0 flex-1 flex-col bg-white">
        <div className="flex shrink-0 flex-col border-b border-[#9db3da] bg-linear-to-b from-[#f4f8ff] to-[#d0e0f7]">
          <Toolbar />
          <BookmarkBar />
        </div>
        <main className="relative flex-1 bg-white pt-[98px]">
          <Survey />
          <svg width="14" height="20" viewBox="0 0 14 20" className="absolute left-[581px] top-[516px]" aria-hidden="true">
            <path d="M1 1v15l3.500-3 3 6 2.500-1.500-3-5.500h5z" fill="#12122c" stroke="#e4e4ea" strokeWidth=".8" />
          </svg>
        </main>
        <DownloadShelf />
      </div>
    </section>
  );
}

const tasks: { label: string; icon: React.ReactNode; active?: boolean; faint?: boolean }[] = [
  { label: "hw1.pdf", icon: <DocIcon />, faint: true },
  { label: "MAGICWHEE…", icon: <CabinetIcon /> },
  { label: "Magic Wheel…", icon: <ChromeLogo size={16} />, active: true },
  { label: "[syllabus.dvi…", icon: <DocIcon />, faint: true },
  { label: "magicwheel…", icon: <CabinetIcon /> },
  { label: "s_index.html…", icon: <NotepadIcon size={16} /> },
  { label: "Magic Wheel…", icon: <FirefoxIcon /> },
  { label: "ChangestoS…", icon: <PresentationIcon /> },
];

function Cpu() {
  return (
    <div className="flex items-center gap-[2px] text-xs">
      <svg width="23" height="20" viewBox="0 0 23 20" className="block" aria-hidden="true">
        <path d="M3 1h11v18H3l-2.500-4V5z" fill="#e8e4a0" stroke="#111" />
        <path d="M4 3h9M4 17h9M2 6v9" stroke="#111" strokeWidth="2" strokeDasharray="1 1" />
        <rect x="4" y="5" width="10" height="10" fill="#53663f" stroke="#222" />
        <rect x="7" y="8" width="4" height="4" fill="#c8d4b8" />
        <rect x="15" y=".8" width="7.500" height="18.400" rx="1" fill="#fff" stroke="#111" strokeWidth="1.500" />
        <rect x="16" y="9" width="5.500" height="9.500" fill="#8c84d8" />
        <path d="M16 5h5" stroke="#bbb" />
      </svg>
      1 GHz
    </div>
  );
}

const monitors: { name: string; draw: React.ReactNode }[] = [
  { name: "Processor", draw: <path d="M5 18v-4h2v2h3v-3h2v3h3v1h2v-6h3v3h2v-1h2v3h3v-2h2v3h1v-4h1v5z" fill="#1b78c0" /> },
  {
    name: "Memory",
    draw: (
      <>
        <rect y="1" width="38" height="9" fill="#a6f3d0" />
        <rect y="9" width="38" height="2" fill="#00f58c" />
        <rect y="11" width="38" height="8" fill="#00b35c" />
      </>
    ),
  },
  { name: "Network", draw: <path d="M0 19V11h1V7h2v2h1v4h1v-2h2v4h1v-3h2V5h1v6h2v3h1v-7h1v3h1v4h2v-3h1V9h1v4h2V7h1v6h1V4h1v3h1v4h1v-2h1v6h2V9h1V6h1v6h1v3h1v-5h1v2h1v-3h1v10z" fill="#fbe34a" /> },
  { name: "Swap", draw: null },
  { name: "Load", draw: null },
  { name: "Disk", draw: <path d="M17 19v-4h2v4zM28 19v-6h1v6z" fill="#f2621b" /> },
];

function BottomPanel() {
  return (
    <footer className="flex h-[27px] shrink-0 items-center border-t-2 border-[#7b7775] bg-[#edeceb] px-px text-xs text-black">
      <Handle />
      <div className="ml-1"><Grip /></div>
      <div className="ml-[3px] flex shrink-0 gap-[2px]">
        {tasks.map((t, i) => (
          <button
            key={i}
            className={
              "flex h-[22px] w-[127px] items-center rounded border border-[#8e8c8a] pl-[6px] " +
              (t.active ? "bg-[#bfbdba]" : "bg-linear-to-b from-white to-[#ececea]")
            }
          >
            <span className={t.faint ? "opacity-20" : ""}>{t.icon}</span>
            <span className="ml-[7px] truncate">{t.label}</span>
          </button>
        ))}
      </div>
      <div className="ml-[9px] flex gap-[27px] whitespace-nowrap">
        <Cpu />
        <Cpu />
      </div>
      <div className="ml-auto flex h-[22px] w-[130px] shrink-0 gap-px overflow-hidden rounded border border-[#a5a29f] bg-[#d9d7d5]">
        <button aria-label="Workspace 1" className="flex flex-1 border border-white bg-[#86a9da]">
          <span className="mb-[3px] w-[24px] self-stretch border border-white bg-[#cfe0f7]" />
        </button>
        <button aria-label="Workspace 2" className="flex-1 bg-[#a9a6a3]" />
        <button aria-label="Workspace 3" className="flex-1 bg-[#a9a6a3]" />
        <button aria-label="Workspace 4" className="flex-1 bg-[#a9a6a3]" />
      </div>
      <div className="ml-[11px] flex shrink-0 gap-[2px]">
        {monitors.map((m) => (
          <div key={m.name} className="h-[22px] w-[40px] border border-[#a5a29f] bg-white p-px">
            <svg width="36" height="18" viewBox="0 0 38 19" preserveAspectRatio="none" className="block bg-black" aria-hidden="true">{m.draw}</svg>
          </div>
        ))}
      </div>
      <button aria-label="Trash" className="ml-[13px] mr-[4px]">
        <Svg size={20} box="0 0 20 20">
          <path d="M1 2.500Q1 1 3 1h14q2 0 2 1.500L18 19H2z" fill="#3d6db3" stroke="#24497f" />
          <path d="M3 3.500h14v3H3z" fill="#24497f" />
          <path d="M2 2h16" stroke="#8fb3e2" strokeWidth="1.300" />
          <path d="M4 9l.5 8M15 9l-6 8" stroke="#7ba3d8" />
        </Svg>
      </button>
      <Handle />
    </footer>
  );
}

export default function App() {
  return (
    <div className="flex h-screen flex-col overflow-hidden" style={{ fontFamily: '"DejaVu Sans", sans-serif' }}>
      <TopPanel />
      <div className="relative min-h-0 flex-1">
        <DocumentWindow />
        <BrowserWindow />
      </div>
      <BottomPanel />
    </div>
  );
}
